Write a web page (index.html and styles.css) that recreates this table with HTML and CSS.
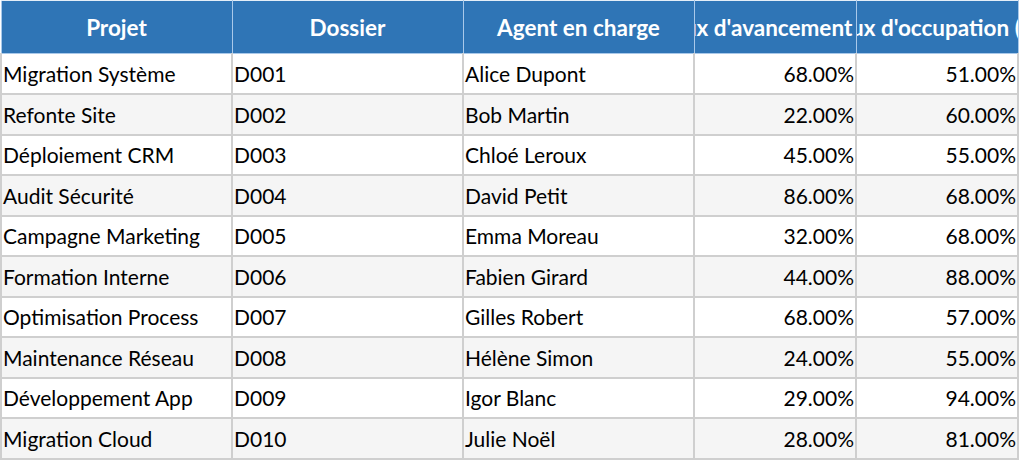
FILE: index.html
```html
<!DOCTYPE html>
<html lang="fr">
<head>
<meta charset="utf-8">
<title>Projets</title>
<link rel="stylesheet" href="styles.css">
</head>
<body>
<table class="grid">
  <colgroup>
    <col class="c-projet"><col class="c-dossier"><col class="c-agent"><col class="c-pct"><col class="c-pct">
  </colgroup>
  <thead>
    <tr>
      <th><div class="hd">Projet</div></th>
      <th><div class="hd">Dossier</div></th>
      <th><div class="hd">Agent en charge</div></th>
      <th><div class="hd">Taux d'avancement (%)</div></th>
      <th><div class="hd">Taux d'occupation (%)</div></th>
    </tr>
  </thead>
  <tbody>
    <tr><td>Migration Système</td><td>D001</td><td>Alice Dupont</td><td class="num">68.00%</td><td class="num">51.00%</td></tr>
    <tr><td>Refonte Site</td><td>D002</td><td>Bob Martin</td><td class="num">22.00%</td><td class="num">60.00%</td></tr>
    <tr><td>Déploiement CRM</td><td>D003</td><td>Chloé Leroux</td><td class="num">45.00%</td><td class="num">55.00%</td></tr>
    <tr><td>Audit Sécurité</td><td>D004</td><td>David Petit</td><td class="num">86.00%</td><td class="num">68.00%</td></tr>
    <tr><td>Campagne Marketing</td><td>D005</td><td>Emma Moreau</td><td class="num">32.00%</td><td class="num">68.00%</td></tr>
    <tr><td>Formation Interne</td><td>D006</td><td>Fabien Girard</td><td class="num">44.00%</td><td class="num">88.00%</td></tr>
    <tr><td>Optimisation Process</td><td>D007</td><td>Gilles Robert</td><td class="num">68.00%</td><td class="num">57.00%</td></tr>
    <tr><td>Maintenance Réseau</td><td>D008</td><td>Hélène Simon</td><td class="num">24.00%</td><td class="num">55.00%</td></tr>
    <tr><td>Développement App</td><td>D009</td><td>Igor Blanc</td><td class="num">29.00%</td><td class="num">94.00%</td></tr>
    <tr><td>Migration Cloud</td><td>D010</td><td>Julie Noël</td><td class="num">28.00%</td><td class="num">81.00%</td></tr>
  </tbody>
</table>
</body>
</html>
```
FILE: styles.css
```css
html, body {
  margin: 0;
  padding: 0;
  background: #ffffff;
}
body {
  font-family: Lato, "Liberation Sans", sans-serif;
  font-size: 21px;
  color: #000000;
  overflow: hidden;
}
.grid {
  border-collapse: collapse;
  table-layout: fixed;
  width: 1018px;
}
.c-projet { width: 231px; }
.c-dossier { width: 231px; }
.c-agent { width: 231px; }
.c-pct { width: 162px; }
.grid thead tr {
  height: 53px;
}
.grid th {
  background: #2f75b6;
  color: #ffffff;
  font-weight: bold;
  font-size: 22.5px;
  padding: 0;
  border: 1px solid #a9c9ea;
  border-top: 1px solid #e4eef8;
  overflow: hidden;
}
.hd {
  display: flex;
  justify-content: center;
  white-space: nowrap;
  overflow: hidden;
}
.grid tbody tr {
  height: 40.5px;
}
.grid td {
  padding: 0 1px 0 1px;
  border: 2px solid #cfcfcf;
  border-top-width: 1px;
  white-space: nowrap;
  overflow: hidden;
  line-height: 1;
}
.grid tbody tr:nth-child(even) td {
  background: #f5f5f5;
}
.grid td.num {
  text-align: right;
}
```
